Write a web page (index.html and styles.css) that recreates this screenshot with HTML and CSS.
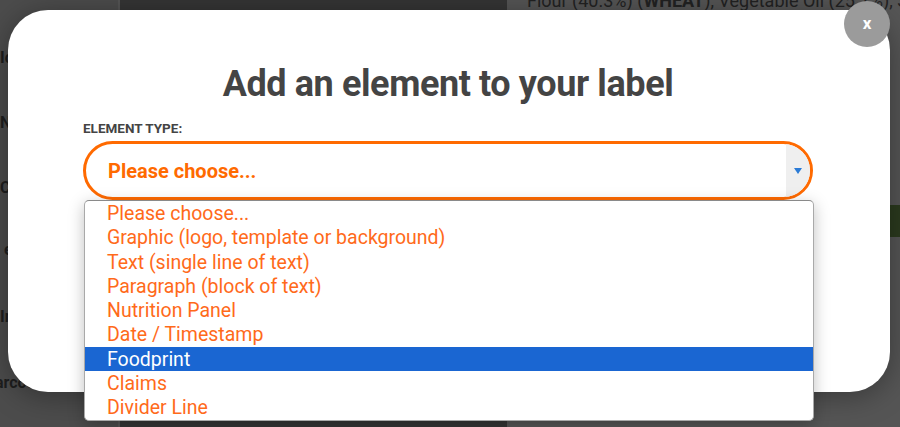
FILE: index.html
```html
<!DOCTYPE html>
<html>
<head>
<meta charset="utf-8">
<link rel="stylesheet" href="styles.css">
</head>
<body>
<div class="page">
  <div class="col col-left">
    <span class="bg-t t1">Ic</span>
    <span class="bg-t t2">Ni</span>
    <span class="bg-t t3">Cc</span>
    <span class="bg-t t4">e</span>
    <span class="bg-t t5">Im</span>
    <span class="bg-t t6">arcod</span>
  </div>
  <div class="col col-mid"></div>
  <div class="col col-right">
    <p class="ingr">Flour (40.3%) (<b>WHEAT</b>), Vegetable Oil (25.1%), Sugar (3</p>
    <div class="green-blob"></div>
  </div>
</div>

<div class="modal">
  <h1 class="title">Add an element to your label</h1>
  <label class="field-label">ELEMENT TYPE:</label>
  <div class="select">
    <span class="select-value">Please choose...</span>
    <span class="select-arrow"><svg width="10" height="8" viewBox="0 0 10 8"><path d="M1 1 L9 1 L5 7 Z" fill="#2b7bd6"/></svg></span>
  </div>
</div>

<button class="close">x</button>

<ul class="options">
  <li>Please choose...</li>
  <li>Graphic (logo, template or background)</li>
  <li>Text (single line of text)</li>
  <li>Paragraph (block of text)</li>
  <li>Nutrition Panel</li>
  <li>Date / Timestamp</li>
  <li class="active">Foodprint</li>
  <li>Claims</li>
  <li>Divider Line</li>
</ul>
</body>
</html>
```

FILE: styles.css
```css
* { box-sizing: border-box; }
html, body { margin: 0; padding: 0; }
body {
  width: 900px;
  height: 427px;
  overflow: hidden;
  position: relative;
  font-family: Roboto, "Liberation Sans", sans-serif;
  background: #4f4f4f;
}
.page {
  display: grid;
  grid-template-columns: 120px 387px 1fr;
  height: 427px;
}
.col { position: relative; overflow: hidden; }
.col-left { background: #4c4c4c; border-right: 2px solid #555; }
.col-mid { background: #353535; }
.col-right { background: #555555; }
.bg-t {
  position: absolute;
  left: 0;
  color: #1e1e1e;
  font-size: 16px;
  font-weight: 700;
}
.t1 { top: 48px; }
.t2 { top: 113px; }
.t3 { top: 178px; }
.t4 { top: 240px; left: 4px; }
.t5 { top: 307px; }
.t6 { top: 373px; left: -5px; }
.ingr {
  margin: -10px 0 0 20px;
  font-size: 18px;
  color: #222;
  white-space: nowrap;
}
.green-blob {
  position: absolute;
  right: 0;
  top: 205px;
  width: 30px;
  height: 32px;
  background: #2b3a1e;
}
.modal {
  position: absolute;
  left: 8px;
  top: 10px;
  width: 882px;
  height: 382px;
  background: #fff;
  border-radius: 40px;
  box-shadow: 0 4px 30px rgba(0,0,0,0.35);
  padding: 51px 77px 0 75px;
}
.title {
  margin: 0;
  text-align: center;
  font-size: 36px;
  font-weight: 700;
  color: #444;
  line-height: 46px;
  letter-spacing: -0.4px;
}
.field-label {
  display: block;
  margin-top: 13px;
  font-size: 13.5px;
  font-weight: 700;
  color: #444;
  line-height: 16px;
}
.select {
  margin-top: 5px;
  height: 59px;
  border: 3px solid #ff6a00;
  border-radius: 30px;
  display: flex;
  align-items: center;
  justify-content: space-between;
  overflow: hidden;
  padding-left: 22px;
}
.select-value {
  color: #ff6a00;
  font-weight: 700;
  font-size: 20px;
}
.select-arrow {
  width: 24px;
  align-self: stretch;
  background: #efefef;
  display: flex;
  align-items: center;
  justify-content: center;
}
.close {
  position: absolute;
  left: 844px;
  top: 1px;
  width: 46px;
  height: 46px;
  border-radius: 50%;
  border: 0;
  background: #9b9b9b;
  color: #fff;
  font-family: Roboto, sans-serif;
  font-weight: 700;
  font-size: 17px;
  padding: 0 0 3px;
}
.options {
  position: absolute;
  left: 84px;
  top: 200px;
  width: 730px;
  margin: 0;
  padding: 0;
  list-style: none;
  background: #fff;
  border: 1px solid #a9a9a9;
  border-top-color: #8a8a8a;
  border-radius: 5px;
  box-shadow: 0 4px 16px rgba(0,0,0,0.25);
}
.options li {
  height: 24.3px;
  line-height: 25px;
  padding-left: 22px;
  color: #ff6a1a;
  font-size: 19.5px;
}
.options li.active {
  background: #1a66d2;
  color: #fff;
}
```
